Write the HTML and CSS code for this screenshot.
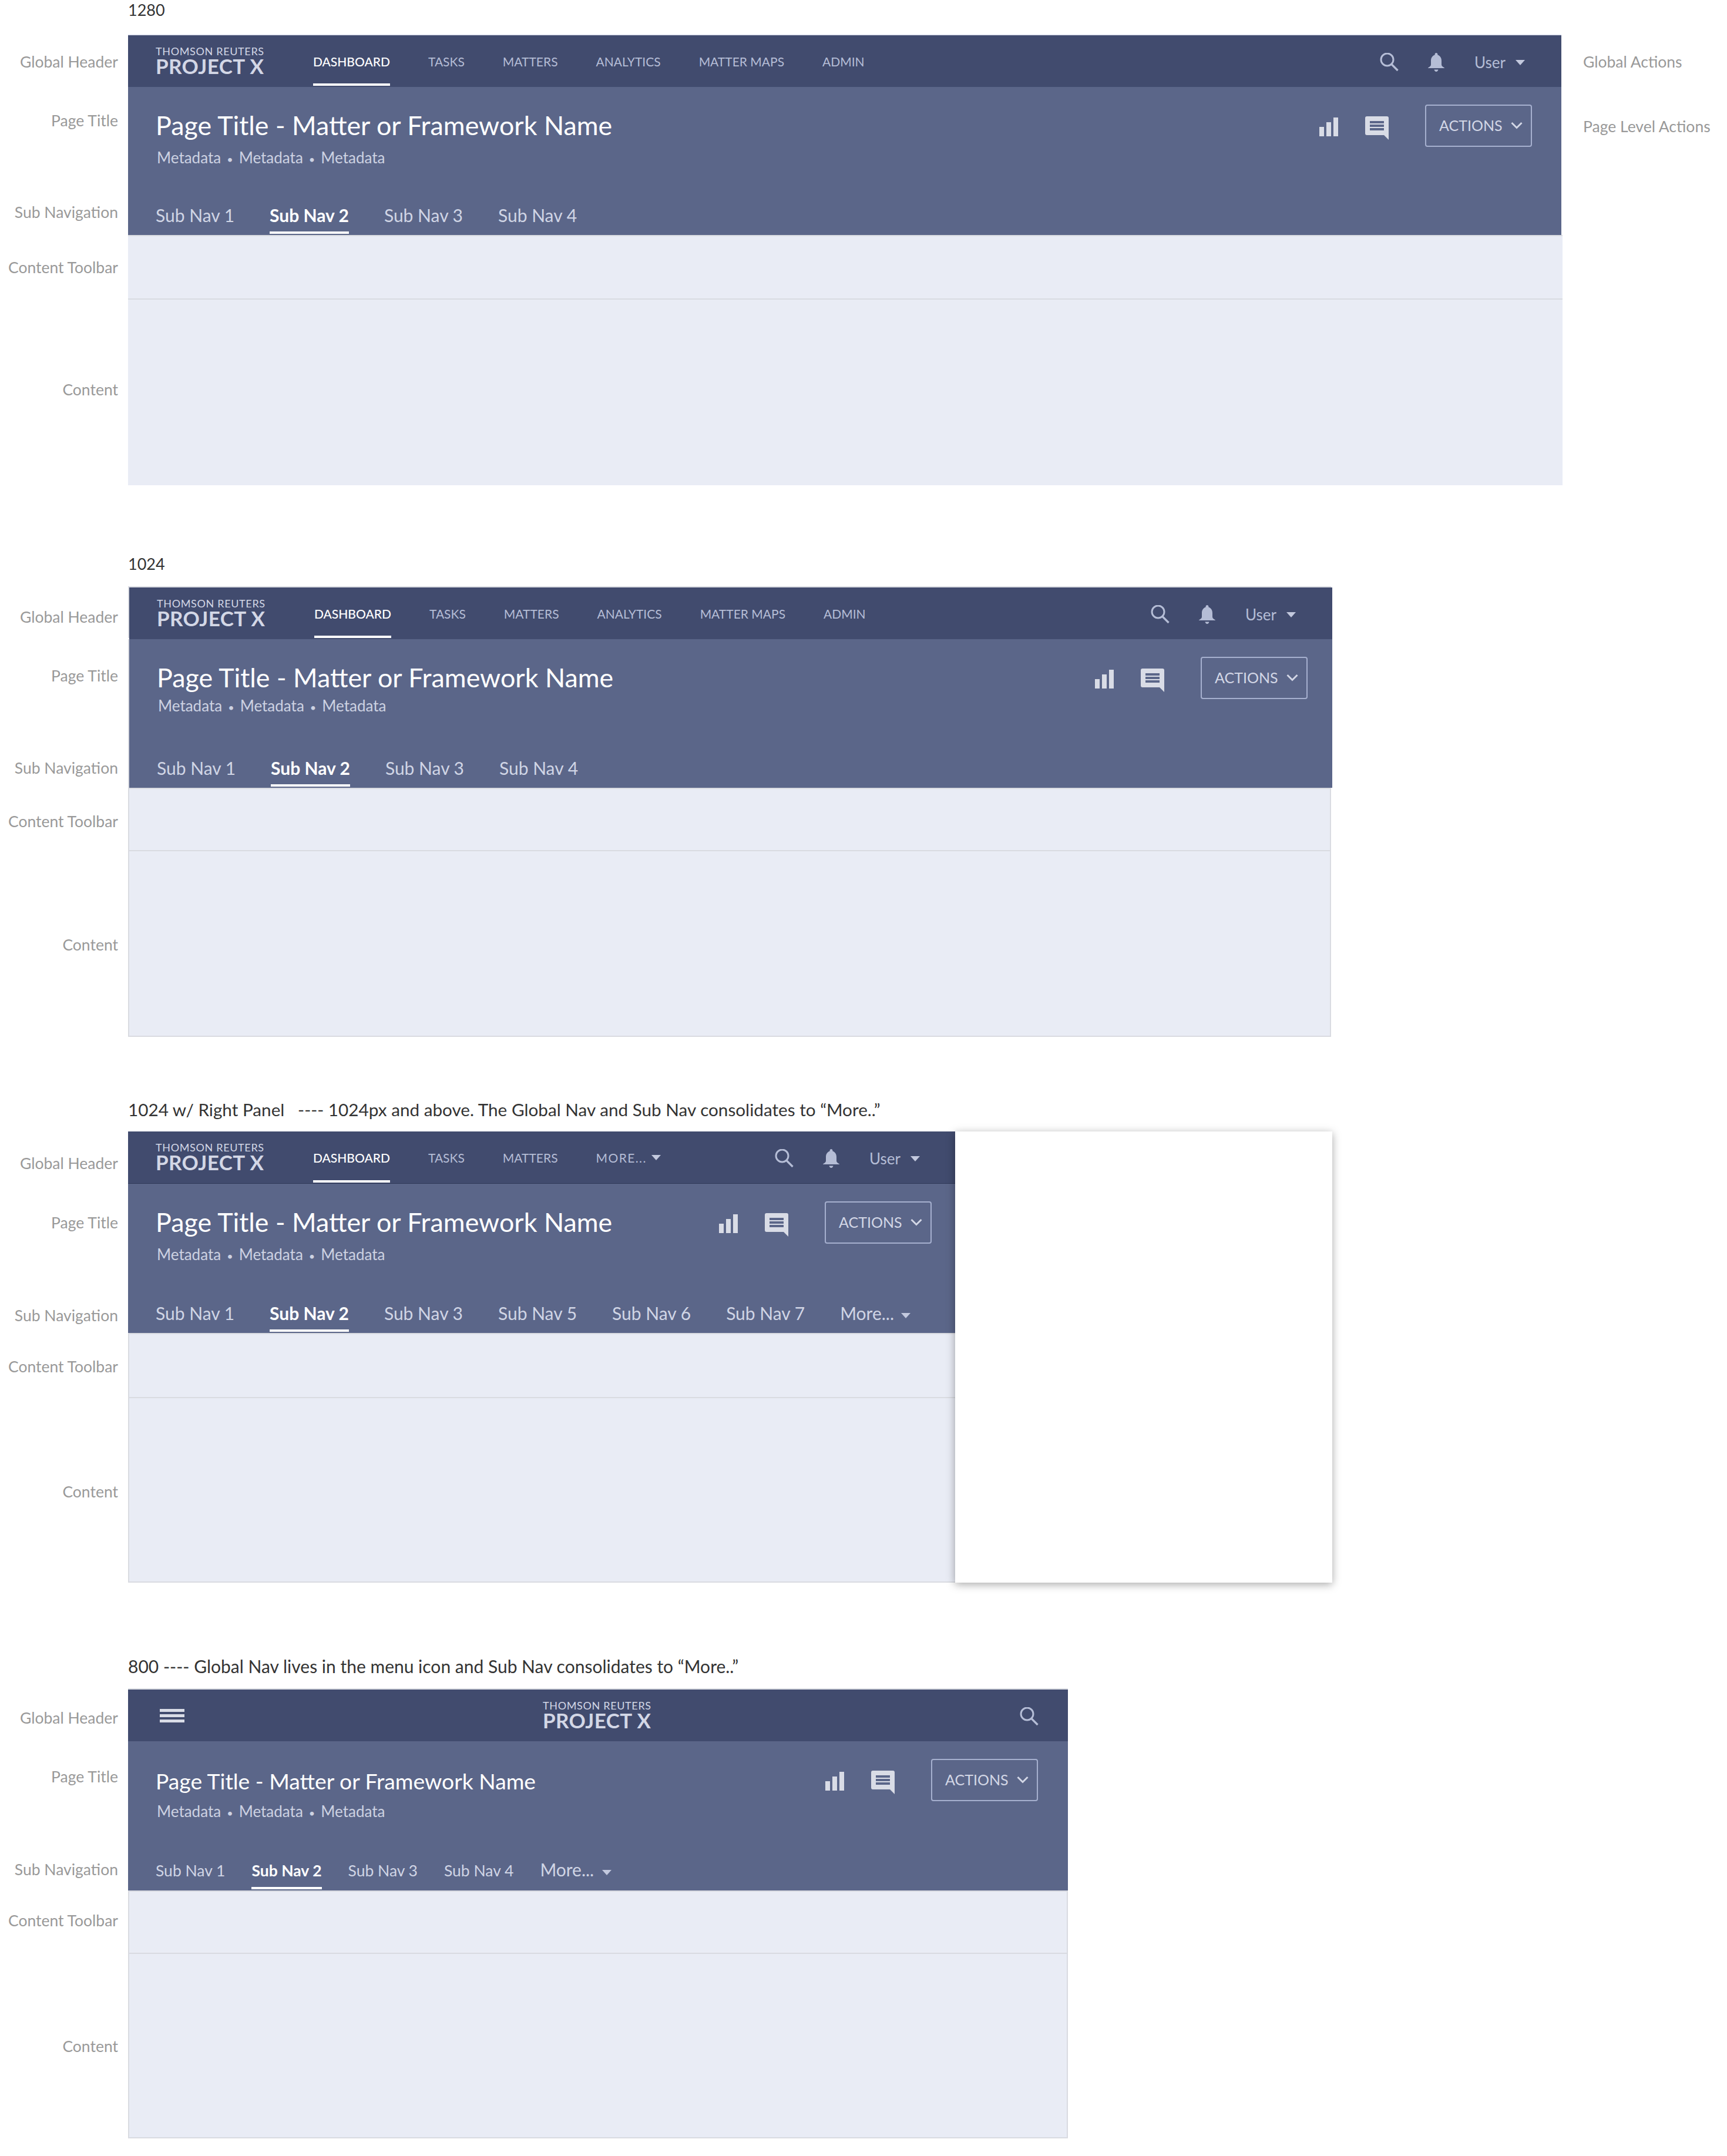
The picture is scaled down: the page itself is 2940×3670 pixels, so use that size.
FILE: index.html
```html
<!DOCTYPE html>
<html lang="en">
<head>
  <meta charset="UTF-8">
  <title>Project X - Responsive Header Spec</title>
  <link rel="stylesheet" href="styles.css">
</head>
<body>
  <svg class="sprites" width="0" height="0">
    <symbol id="i-search" viewBox="0 0 32 32"><circle cx="12.5" cy="11.5" r="10.5" fill="none" stroke="currentColor" stroke-width="3"/><path d="M19.5 19l11 11" fill="none" stroke="currentColor" stroke-width="3.4"/></symbol>
    <symbol id="i-bell" viewBox="0 0 28 32"><path fill="currentColor" d="M14 0c1.4 0 2.4 1 2.4 2.4v1.2C20.6 4.8 23 8.8 23 13.5V20c0 2 1.6 3.6 5 5.4V26H0v-.6C3.4 23.6 5 22 5 20v-6.5C5 8.8 7.4 4.8 11.6 3.6V2.4C11.6 1 12.6 0 14 0zM10.5 28.500h7C17 30.500 15.600 32 14 32s-3-1.500-3.500-3.500z"/></symbol>
    <symbol id="i-chart" viewBox="0 0 32 32"><path fill="currentColor" d="M0 16h8v16H0zM12 8h8v24h-8zM24 0h8v32h-8z"/></symbol>
    <symbol id="i-comment" viewBox="0 0 40 40"><path fill="currentColor" d="M3 0h34a3 3 0 0 1 3 3v37l-8-8H3a3 3 0 0 1-3-3V3a3 3 0 0 1 3-3z"/><path fill="#5b6689" d="M8 8h24v4H8zM8 14h24v4H8zM8 20h24v4H8z"/></symbol>
    <symbol id="i-chevron" viewBox="0 0 20 13"><path d="M1.500 2l8.500 8.500L18.500 2" fill="none" stroke="currentColor" stroke-width="3"/></symbol>
    <symbol id="i-caret" viewBox="0 0 16 9"><path fill="currentColor" d="M0 0h16L8 9z"/></symbol>
  </svg>

  <!-- 1280 -->
  <p class="caption caption-first">1280</p>
  <section class="frame frame-1280">
    <div class="label label-header">Global Header</div>
    <header class="global-bar">
      <div class="logo"><span class="logo-top">THOMSON REUTERS</span><span class="logo-main">PROJECT X</span></div>
      <nav class="global-nav">
        <a class="global-link active">DASHBOARD</a>
        <a class="global-link">TASKS</a>
        <a class="global-link">MATTERS</a>
        <a class="global-link">ANALYTICS</a>
        <a class="global-link">MATTER MAPS</a>
        <a class="global-link">ADMIN</a>
      </nav>
      <div class="global-actions">
        <svg class="icon-search"><use href="#i-search"/></svg>
        <svg class="icon-bell"><use href="#i-bell"/></svg>
        <span class="user">User <svg class="caret"><use href="#i-caret"/></svg></span>
      </div>
    </header>
    <div class="side-label">Global Actions</div>

    <div class="label label-title">Page Title</div>
    <div class="title-bar">
      <div class="title-text">
        <h1 class="page-title">Page Title - Matter or Framework Name</h1>
        <p class="meta">Metadata<span class="dot">•</span>Metadata<span class="dot">•</span>Metadata</p>
      </div>
      <div class="page-actions">
        <svg class="icon-chart"><use href="#i-chart"/></svg>
        <svg class="icon-comment"><use href="#i-comment"/></svg>
        <button class="actions-btn">ACTIONS <svg class="chevron"><use href="#i-chevron"/></svg></button>
      </div>
    </div>
    <div class="side-label side-label-title">Page Level Actions</div>

    <div class="label label-sub">Sub Navigation</div>
    <nav class="sub-nav">
      <a class="sub-link">Sub Nav 1</a>
      <a class="sub-link active">Sub Nav 2</a>
      <a class="sub-link">Sub Nav 3</a>
      <a class="sub-link">Sub Nav 4</a>
    </nav>

    <div class="label label-toolbar">Content Toolbar</div>
    <div class="toolbar"></div>

    <div class="label label-content">Content</div>
    <div class="content"></div>
  </section>

  <!-- 1024 -->
  <p class="caption caption-1024">1024</p>
  <section class="frame frame-1024 frame-outlined">
    <div class="label label-header">Global Header</div>
    <header class="global-bar">
      <div class="logo"><span class="logo-top">THOMSON REUTERS</span><span class="logo-main">PROJECT X</span></div>
      <nav class="global-nav">
        <a class="global-link active">DASHBOARD</a>
        <a class="global-link">TASKS</a>
        <a class="global-link">MATTERS</a>
        <a class="global-link">ANALYTICS</a>
        <a class="global-link">MATTER MAPS</a>
        <a class="global-link">ADMIN</a>
      </nav>
      <div class="global-actions">
        <svg class="icon-search"><use href="#i-search"/></svg>
        <svg class="icon-bell"><use href="#i-bell"/></svg>
        <span class="user">User <svg class="caret"><use href="#i-caret"/></svg></span>
      </div>
    </header>

    <div class="label label-title">Page Title</div>
    <div class="title-bar">
      <div class="title-text">
        <h1 class="page-title">Page Title - Matter or Framework Name</h1>
        <p class="meta">Metadata<span class="dot">•</span>Metadata<span class="dot">•</span>Metadata</p>
      </div>
      <div class="page-actions">
        <svg class="icon-chart"><use href="#i-chart"/></svg>
        <svg class="icon-comment"><use href="#i-comment"/></svg>
        <button class="actions-btn">ACTIONS <svg class="chevron"><use href="#i-chevron"/></svg></button>
      </div>
    </div>

    <div class="label label-sub">Sub Navigation</div>
    <nav class="sub-nav">
      <a class="sub-link">Sub Nav 1</a>
      <a class="sub-link active">Sub Nav 2</a>
      <a class="sub-link">Sub Nav 3</a>
      <a class="sub-link">Sub Nav 4</a>
    </nav>

    <div class="label label-toolbar">Content Toolbar</div>
    <div class="toolbar"></div>

    <div class="label label-content">Content</div>
    <div class="content"></div>
  </section>

  <!-- 1024 with right panel -->
  <p class="caption caption-long caption-panel">1024 w/ Right Panel   ---- 1024px and above. The Global Nav and Sub Nav consolidates to “More..”</p>
  <section class="frame frame-panel frame-outlined">
    <div class="label label-header">Global Header</div>
    <header class="global-bar">
      <div class="logo"><span class="logo-top">THOMSON REUTERS</span><span class="logo-main">PROJECT X</span></div>
      <nav class="global-nav">
        <a class="global-link active">DASHBOARD</a>
        <a class="global-link">TASKS</a>
        <a class="global-link">MATTERS</a>
        <a class="global-link global-link-more">MORE... <svg class="caret"><use href="#i-caret"/></svg></a>
      </nav>
      <div class="global-actions">
        <svg class="icon-search"><use href="#i-search"/></svg>
        <svg class="icon-bell"><use href="#i-bell"/></svg>
        <span class="user">User <svg class="caret"><use href="#i-caret"/></svg></span>
      </div>
    </header>
    <aside class="right-panel"></aside>

    <div class="label label-title">Page Title</div>
    <div class="title-bar">
      <div class="title-text">
        <h1 class="page-title">Page Title - Matter or Framework Name</h1>
        <p class="meta">Metadata<span class="dot">•</span>Metadata<span class="dot">•</span>Metadata</p>
      </div>
      <div class="page-actions">
        <svg class="icon-chart"><use href="#i-chart"/></svg>
        <svg class="icon-comment"><use href="#i-comment"/></svg>
        <button class="actions-btn">ACTIONS <svg class="chevron"><use href="#i-chevron"/></svg></button>
      </div>
    </div>

    <div class="label label-sub">Sub Navigation</div>
    <nav class="sub-nav">
      <a class="sub-link">Sub Nav 1</a>
      <a class="sub-link active">Sub Nav 2</a>
      <a class="sub-link">Sub Nav 3</a>
      <a class="sub-link">Sub Nav 5</a>
      <a class="sub-link">Sub Nav 6</a>
      <a class="sub-link">Sub Nav 7</a>
      <a class="sub-link">More... <svg class="caret"><use href="#i-caret"/></svg></a>
    </nav>

    <div class="label label-toolbar">Content Toolbar</div>
    <div class="toolbar"></div>

    <div class="label label-content">Content</div>
    <div class="content"></div>
  </section>

  <!-- 800 -->
  <p class="caption caption-long caption-800">800 ---- Global Nav lives in the menu icon and Sub Nav consolidates to “More..”</p>
  <section class="frame frame-800 frame-outlined">
    <div class="label label-header">Global Header</div>
    <header class="global-bar global-bar-compact">
      <div class="hamburger"><span></span><span></span><span></span></div>
      <div class="logo"><span class="logo-top">THOMSON REUTERS</span><span class="logo-main">PROJECT X</span></div>
      <svg class="icon-search"><use href="#i-search"/></svg>
    </header>

    <div class="label label-title">Page Title</div>
    <div class="title-bar">
      <div class="title-text">
        <h1 class="page-title">Page Title - Matter or Framework Name</h1>
        <p class="meta">Metadata<span class="dot">•</span>Metadata<span class="dot">•</span>Metadata</p>
      </div>
      <div class="page-actions">
        <svg class="icon-chart"><use href="#i-chart"/></svg>
        <svg class="icon-comment"><use href="#i-comment"/></svg>
        <button class="actions-btn">ACTIONS <svg class="chevron"><use href="#i-chevron"/></svg></button>
      </div>
    </div>

    <div class="label label-sub">Sub Navigation</div>
    <nav class="sub-nav">
      <a class="sub-link">Sub Nav 1</a>
      <a class="sub-link active">Sub Nav 2</a>
      <a class="sub-link">Sub Nav 3</a>
      <a class="sub-link">Sub Nav 4</a>
      <a class="sub-link sub-link-more">More... <svg class="caret"><use href="#i-caret"/></svg></a>
    </nav>

    <div class="label label-toolbar">Content Toolbar</div>
    <div class="toolbar"></div>

    <div class="label label-content">Content</div>
    <div class="content"></div>
  </section>
</body>
</html>
```

FILE: styles.css
```css
body {
    margin: 0;
    background-color: #fff;
    font-family: Lato, "Noto Sans", sans-serif;
    color: #333;
}
.sprites {
    position: absolute;
}
svg {
    display: block;
    flex: none;
}

/* captions above each breakpoint */
.caption {
    margin: 0;
    padding-left: 218px;
    font-size: 27px;
    line-height: 34px;
    white-space: pre;
}
.caption-long {
    font-size: 29.7px;
}
.caption-first { margin-bottom: 26px; }
.caption-1024 { margin-top: 117px; margin-bottom: 23px; }
.caption-panel { margin-top: 107px; margin-bottom: 20px; }
.caption-800 { margin-top: 125px; margin-bottom: 23px; font-size: 30px; }

/* one breakpoint: label column, mock, side column */
.frame {
    --shift: 0px;
    --header-h: 88px;
    --title-h: 168px;
    --toolbar-h: 110px;
    --content-h: 316px;
    --pad-right: 50px;
    display: grid;
    grid-template-columns: 218px 2442px 1fr;
}
.frame-1024 {
    --shift: 5px;
    --title-h: 169px;
    --toolbar-h: 108px;
    --pad-right: 42px;
    grid-template-columns: 218px 2050px 1fr;
}
.frame-panel {
    --shift: 9px;
    --header-h: 89px;
    --title-h: 170px;
    --toolbar-h: 111px;
    --content-h: 314px;
    --pad-right: 42px;
    grid-template-columns: 218px 1410px 640px;
}
.frame-800 {
    --shift: 3px;
    --title-h: 170px;
    --toolbar-h: 108px;
    --content-h: 314px;
    --pad-right: 51px;
    grid-template-columns: 218px 1600px 1fr;
}

/* annotation labels */
.label {
    grid-column: 1;
    padding: calc(var(--pad) + var(--shift)) 17px 0 0;
    text-align: right;
    font-size: 26.5px;
    line-height: 36px;
    color: #999;
}
.label-header { --pad: 27px; }
.label-title { --pad: 39px; }
.label-sub { --pad: 27px; }
.label-toolbar { --pad: 37px; }
.label-content { --pad: 135px; }
.frame-1024 .label-toolbar { --shift: 2px; }
.frame-panel .label-toolbar { --shift: 2px; }
.frame-800 .label-toolbar { --shift: -4px; }
.frame-panel .label-content { --shift: 6px; }
.frame-800 .label-content { --shift: 4px; }
.frame-1024 .label-content { --shift: 6px; }
.side-label {
    grid-column: 3;
    padding: 27px 0 0 35px;
    font-size: 26.5px;
    line-height: 36px;
    color: #999;
}
.side-label-title { padding-top: 49px; }

/* global header */
.global-bar {
    grid-column: 2;
    display: flex;
    align-items: center;
    height: var(--header-h);
    padding-left: 47px;
    padding-right: 62px;
    background-color: #414b6e;
    color: #b5bdd6;
    box-shadow: 0 -2px 0 #e9ecf5;
}
.frame-1280 .global-bar,
.frame-1280 .title-bar,
.frame-1280 .sub-nav {
    margin-right: 2px;
}
.frame-1024 .global-bar,
.frame-1024 .title-bar,
.frame-1024 .sub-nav {
    margin-left: 2px;
    box-shadow: -2px 0 0 #d9dbe1;
}
.frame-1024 .global-bar {
    box-shadow: -2px -2px 0 #d9dbe1;
}
.frame-1024 .toolbar,
.frame-1024 .content {
    margin-right: 2px;
}
.frame-800 .global-bar {
    box-shadow: 0 -2px 0 #d9dbe1;
}
.frame-panel .global-bar {
    box-sizing: border-box;
    border-bottom: 1px solid #2f3858;
    box-shadow: none;
}
.logo {
    display: flex;
    flex-direction: column;
    margin-bottom: 5px;
    width: 186px;
    white-space: nowrap;
}
.logo-top {
    font-size: 18px;
    line-height: 20px;
    letter-spacing: 0.65px;
    color: #d3d7e6;
}
.logo-main {
    font-size: 35px;
    line-height: 30px;
    font-weight: 700;
    letter-spacing: 0.4px;
    color: #d3d7e6;
}
.global-nav {
    display: flex;
    gap: 65px;
    align-self: stretch;
    margin-left: 82px;
}
.global-link {
    box-sizing: border-box;
    display: flex;
    align-items: center;
    gap: 8px;
    height: calc(var(--header-h) - 2px);
    padding-top: 6px;
    border-bottom: 4px solid transparent;
    font-size: 21px;
    white-space: nowrap;
}
.global-link.active {
    color: #fff;
    font-weight: 500;
    border-bottom-color: #fff;
}
.global-link-more {
    letter-spacing: 1.4px;
}
.global-actions {
    display: flex;
    align-items: center;
    margin-top: 4px;
    margin-left: auto;
}
.icon-search {
    width: 32px;
    height: 32px;
}
.icon-bell {
    width: 28px;
    height: 32px;
    margin-left: 50px;
}
.user {
    display: flex;
    align-items: center;
    gap: 17px;
    margin-left: 51px;
    font-size: 26px;
}
.caret {
    width: 16px;
    height: 9px;
    color: #c3c9de;
}
.global-bar-compact {
    justify-content: space-between;
    padding-right: 50px;
}
.global-bar-compact .logo {
    margin-left: -16px;
}
.global-bar-compact .icon-search {
    margin-top: 4px;
}
.hamburger {
    display: flex;
    flex-direction: column;
    gap: 4px;
    width: 42px;
    margin-left: 7px;
}
.hamburger span {
    height: 5px;
    background-color: #d9dce6;
}

/* page title */
.title-bar {
    grid-column: 2;
    box-sizing: border-box;
    display: flex;
    justify-content: space-between;
    height: var(--title-h);
    padding: 30px var(--pad-right) 0 47px;
    background-color: #5b6689;
}
.title-text {
    margin-top: 5px;
}
.page-title {
    margin: 0;
    font-size: 44.8px;
    line-height: 60px;
    font-weight: 400;
    color: #fff;
    white-space: nowrap;
}
.meta {
    margin: 7px 0 0 2px;
    font-size: 26px;
    line-height: 36px;
    color: #cdd2e2;
}
.frame-1024 .meta {
    margin-top: 0;
}
.frame-800 .title-text {
    margin-top: 8px;
}
.frame-800 .page-title {
    font-size: 37.3px;
}
.frame-800 .meta {
    margin-top: 3px;
}
.dot {
    margin: 0 10px;
    font-size: 18px;
}
.page-actions {
    display: flex;
    align-items: center;
    align-self: flex-start;
    color: #d9dce6;
}
.icon-chart {
    width: 32px;
    height: 32px;
    margin-top: 4px;
}
.icon-comment {
    width: 40px;
    height: 40px;
    margin-top: 8px;
    margin-left: 46px;
}
.actions-btn {
    display: flex;
    align-items: center;
    gap: 14px;
    box-sizing: border-box;
    width: 182px;
    height: 72px;
    margin-left: 62px;
    padding: 0 0 2px 22px;
    background: none;
    border: 2px solid #a6b0cf;
    border-radius: 4px;
    font-family: inherit;
    font-size: 25px;
    color: #d3d7e6;
}
.chevron {
    width: 20px;
    height: 13px;
}

/* sub navigation */
.sub-nav {
    grid-column: 2;
    display: flex;
    gap: 60px;
    height: 84px;
    padding-left: 47px;
    background-color: #5b6689;
    color: #d0d5e5;
}
.sub-link {
    box-sizing: border-box;
    display: flex;
    align-items: flex-start;
    gap: 12px;
    height: 82px;
    padding-top: 30px;
    border-bottom: 4px solid transparent;
    font-size: 30px;
    line-height: 40px;
    white-space: nowrap;
}
.sub-link .caret {
    align-self: center;
}
.sub-link.active {
    font-weight: 700;
    color: #fff;
    border-bottom-color: #fff;
}
.frame-800 .sub-nav {
    gap: 45px;
}
.frame-800 .sub-link {
    font-size: 26.5px;
}
.frame-800 .sub-link-more {
    gap: 14px;
    padding-top: 28px;
    font-size: 30px;
}

/* content areas */
.toolbar {
    grid-column: 2;
    box-sizing: border-box;
    height: var(--toolbar-h);
    background-color: #e9ecf5;
    border-top: 2px solid #d9dbe1;
    border-bottom: 2px solid #d9dbe1;
}
.content {
    grid-column: 2;
    box-sizing: border-box;
    height: var(--content-h);
    background-color: #e9ecf5;
}
.frame-outlined .toolbar,
.frame-outlined .content {
    border-left: 2px solid #d9dbe1;
    border-right: 2px solid #d9dbe1;
}
.frame-outlined .content {
    border-bottom: 2px solid #d9dbe1;
}

/* right panel */
.right-panel {
    grid-column: 3;
    grid-row: 1 / span 5;
    margin-left: -2px;
    background-color: #fff;
    box-shadow: 0 3px 14px rgba(0, 0, 0, 0.35);
    position: relative;
}
```
